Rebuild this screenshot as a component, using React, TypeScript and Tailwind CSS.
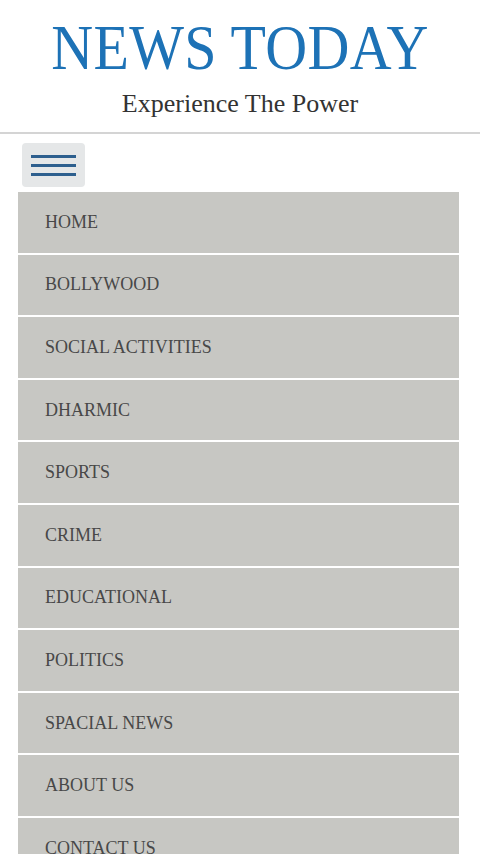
import React from "react";

const items = [
  "HOME",
  "BOLLYWOOD",
  "SOCIAL ACTIVITIES",
  "DHARMIC",
  "SPORTS",
  "CRIME",
  "EDUCATIONAL",
  "POLITICS",
  "SPACIAL NEWS",
  "ABOUT US",
  "CONTACT US",
];

export default function App() {
  return (
    <div className="w-[480px] h-[854px] overflow-hidden bg-white" style={{ fontFamily: '"Liberation Serif", "DejaVu Serif", serif' }}>
      <header className="flex flex-col items-center pt-[15px]">
        <h1 className="text-[#1d72b6] text-[58px] leading-[66px] tracking-[0.3px] scale-y-[1.1]">NEWS TODAY</h1>
        <p className="text-[#333] text-[26px] leading-[30px] mt-[8px]">Experience The Power</p>
      </header>
      <div className="mt-[13px] h-[2px] bg-[#d4d4d4]" />
      <div className="pl-[22px] pt-[9px]">
        <button className="w-[63px] h-[44px] rounded-[4px] bg-[#e5e7e8] flex flex-col items-center justify-center gap-[6px]">
          <span className="block w-[45px] h-[3px] bg-[#2d5f8e]" />
          <span className="block w-[45px] h-[3px] bg-[#2d5f8e]" />
          <span className="block w-[45px] h-[3px] bg-[#2d5f8e]" />
        </button>
      </div>
      <nav className="mx-[18px] mt-[5px] w-[441px] flex flex-col gap-[2px]">
        {items.map((t) => (
          <div key={t} className="h-[60.6px] flex items-center pl-[27px] bg-[#c7c7c3] text-[#484848] text-[18px]">
            {t}
          </div>
        ))}
      </nav>
    </div>
  );
}
